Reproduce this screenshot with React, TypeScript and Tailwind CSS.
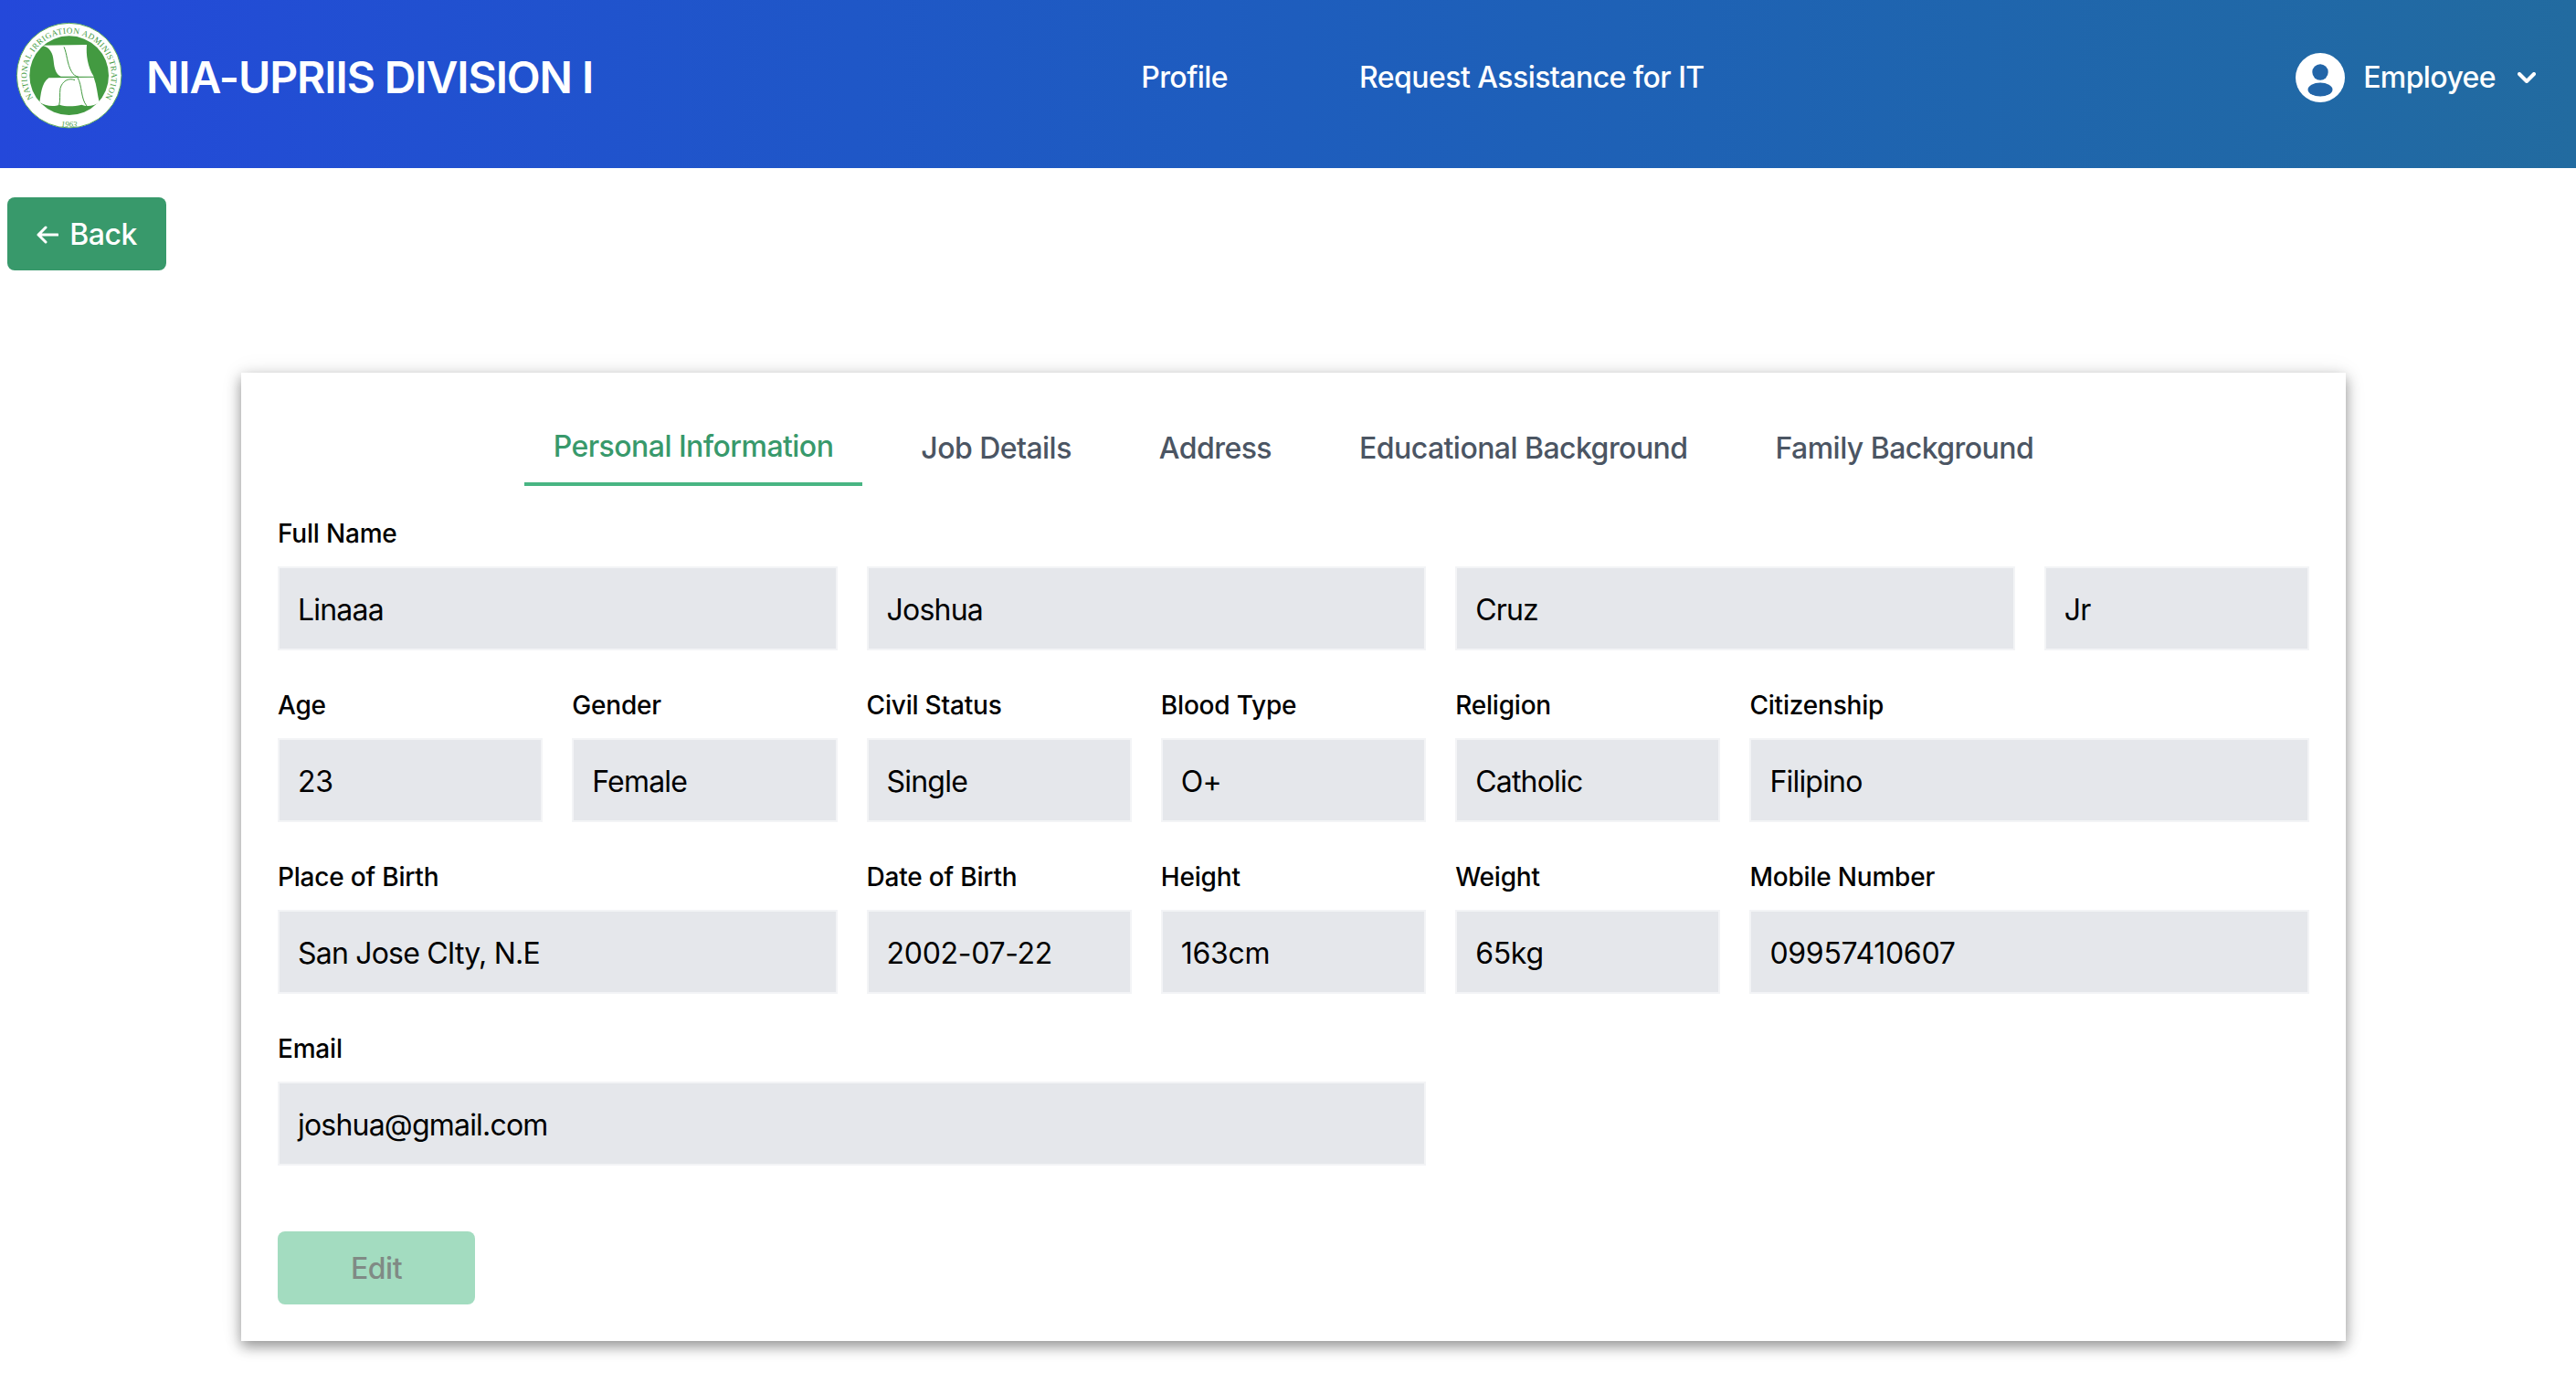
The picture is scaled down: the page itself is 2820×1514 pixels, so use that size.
const tabs = ["Personal Information", "Job Details", "Address", "Educational Background", "Family Background"];

type FieldProps = { label?: string; value: string; className?: string };

function Field({ label, value, className = "" }: FieldProps) {
  // digits sit a little wider than letters in the reference
  const spacing = /^\d/.test(value) ? "tracking-[-0.3px]" : "tracking-[-0.8px]";
  return (
    <div className={`flex flex-col ${className}`}>
      <label className="h-[40px] text-[28px] leading-[40px] font-medium tracking-[-0.2px] text-black">{label}</label>
      <div className={`mt-4 flex h-[92px] items-center border-2 border-[#f3f4f6] bg-[#e5e7eb] px-5 pt-[3px] text-[32px] text-black ${spacing}`}>
        {value}
      </div>
    </div>
  );
}

function Logo() {
  return (
    <svg viewBox="0 0 450 450" className="h-[150px] w-[150px] shrink-0">
      <circle cx="227" cy="218" r="172" fill="#ffffff" stroke="#5aa85a" strokeWidth="3" />
      <circle cx="227" cy="218" r="130" fill="#439a41" />
      <defs>
        <path id="ring" d="M 109 292 A 139 139 0 1 1 345 292" fill="none" />
      </defs>
      <text fill="#439a41" fontFamily="'Liberation Serif', serif" fontSize="27">
        <textPath href="#ring" textLength="590">NATIONAL IRRIGATION ADMINISTRATION</textPath>
      </text>
      <text x="227" y="386" textAnchor="middle" fill="#439a41" fontFamily="'Liberation Serif', serif" fontSize="26" fontStyle="italic">
        1963
      </text>
      <g transform="translate(90 90)">
        <path
          d="M48 29 L195 27 C192 60 198 100 218 131 L110 131 C95 125 88 105 86 80 C84 55 75 35 48 29 Z"
          fill="#ffffff"
        />
        <path d="M120 34 C130 55 130 90 145 115 C150 125 158 130 168 133" fill="none" stroke="#439a41" strokeWidth="3" />
        <path
          d="M70 136 L218 134 C228 160 230 190 236 216 C220 228 195 232 178 224 C150 230 125 230 106 224 C85 232 60 228 40 216 C45 190 45 155 70 136 Z"
          fill="#ffffff"
        />
        <path d="M156 143 C135 134 114 147 108 170 C105 190 109 208 104 226" fill="none" stroke="#439a41" strokeWidth="3" />
        <path d="M165 135 C180 160 175 205 195 228" fill="none" stroke="#439a41" strokeWidth="3" />
      </g>
    </svg>
  );
}

function AvatarIcon() {
  return (
    <svg viewBox="0 0 54 54" className="h-[54px] w-[54px]">
      <circle cx="27" cy="27" r="27" fill="#ffffff" />
      <circle cx="27" cy="21" r="8.7" fill="#2265a8" />
      <ellipse cx="27" cy="40" rx="13.5" ry="7.5" fill="#2265a8" />
    </svg>
  );
}

export default function App() {
  return (
    <div className="min-h-[1514px] bg-white font-['Inter',sans-serif]">
      <header className="flex h-[184px] items-center bg-gradient-to-r from-[#2448da] to-[#226ba0] pb-[14px] text-white">
        <div className="flex items-center">
          <Logo />
          <h1 className="ml-[10px] text-[48px] font-semibold tracking-[-1.1px]">NIA-UPRIIS DIVISION I</h1>
        </div>
        <nav className="ml-[600px] flex items-center gap-[144px] text-[32px] font-medium tracking-[-0.55px]">
          <a>Profile</a>
          <a>Request Assistance for IT</a>
        </nav>
        <div className="ml-auto flex items-center pr-11">
          <AvatarIcon />
          <span className="ml-[20px] text-[32px] font-medium tracking-[-0.6px]">Employee</span>
          <svg viewBox="0 0 20 12" className="ml-6 h-3 w-5" fill="none" stroke="#ffffff" strokeWidth="4" strokeLinecap="round" strokeLinejoin="round">
            <path d="M2 2 L10 10 L18 2" />
          </svg>
        </div>
      </header>

      <main>
        <button className="mt-8 ml-2 flex h-20 w-[174px] items-center justify-center rounded-lg bg-[#38996b] pt-0.5 text-[32px] font-medium tracking-[-0.5px] text-white">
          <svg viewBox="0 0 24 20" className="mr-[12px] h-5 w-6" fill="none" stroke="#ffffff" strokeWidth="3" strokeLinecap="round" strokeLinejoin="round">
            <path d="M23 10 H2 M10 2 L2 10 L10 18" />
          </svg>
          Back
        </button>

        <section className="mt-[112px] ml-[264px] h-[1060px] w-[2304px] bg-white px-10 pt-10 shadow-[0_6px_14px_rgba(0,0,0,0.4),0_0_24px_rgba(0,0,0,0.08)]">
          <div className="flex justify-center gap-8">
            {tabs.map((tab, i) => (
              <button
                key={tab}
                className={`h-[84px] border-b-4 px-8 text-[32px] font-medium tracking-[-0.55px] ${
                  i === 0 ? "border-[#48b583] pt-0.5 text-[#38996b]" : "border-transparent pt-1.5 text-[#4b5563]"
                }`}
              >
                {tab}
              </button>
            ))}
          </div>

          <div className="mt-8 grid grid-cols-7 gap-x-8 gap-y-10">
            <Field label="Full Name" value="Linaaa" className="col-span-2" />
            <Field label=" " value="Joshua" className="col-span-2" />
            <Field label=" " value="Cruz" className="col-span-2" />
            <Field label=" " value="Jr" />

            <Field label="Age" value="23" />
            <Field label="Gender" value="Female" />
            <Field label="Civil Status" value="Single" />
            <Field label="Blood Type" value="O+" />
            <Field label="Religion" value="Catholic" />
            <Field label="Citizenship" value="Filipino" className="col-span-2" />

            <Field label="Place of Birth" value="San Jose CIty, N.E" className="col-span-2" />
            <Field label="Date of Birth" value="2002-07-22" />
            <Field label="Height" value="163cm" />
            <Field label="Weight" value="65kg" />
            <Field label="Mobile Number" value="09957410607" className="col-span-2" />

            <Field label="Email" value="joshua@gmail.com" className="col-span-4" />
          </div>

          <button className="mt-[72px] h-20 w-[216px] rounded-lg bg-[#a3dcc0] pt-0.5 text-[32px] font-medium tracking-[-0.5px] text-[#808a85]">
            Edit
          </button>
        </section>
      </main>
    </div>
  );
}
